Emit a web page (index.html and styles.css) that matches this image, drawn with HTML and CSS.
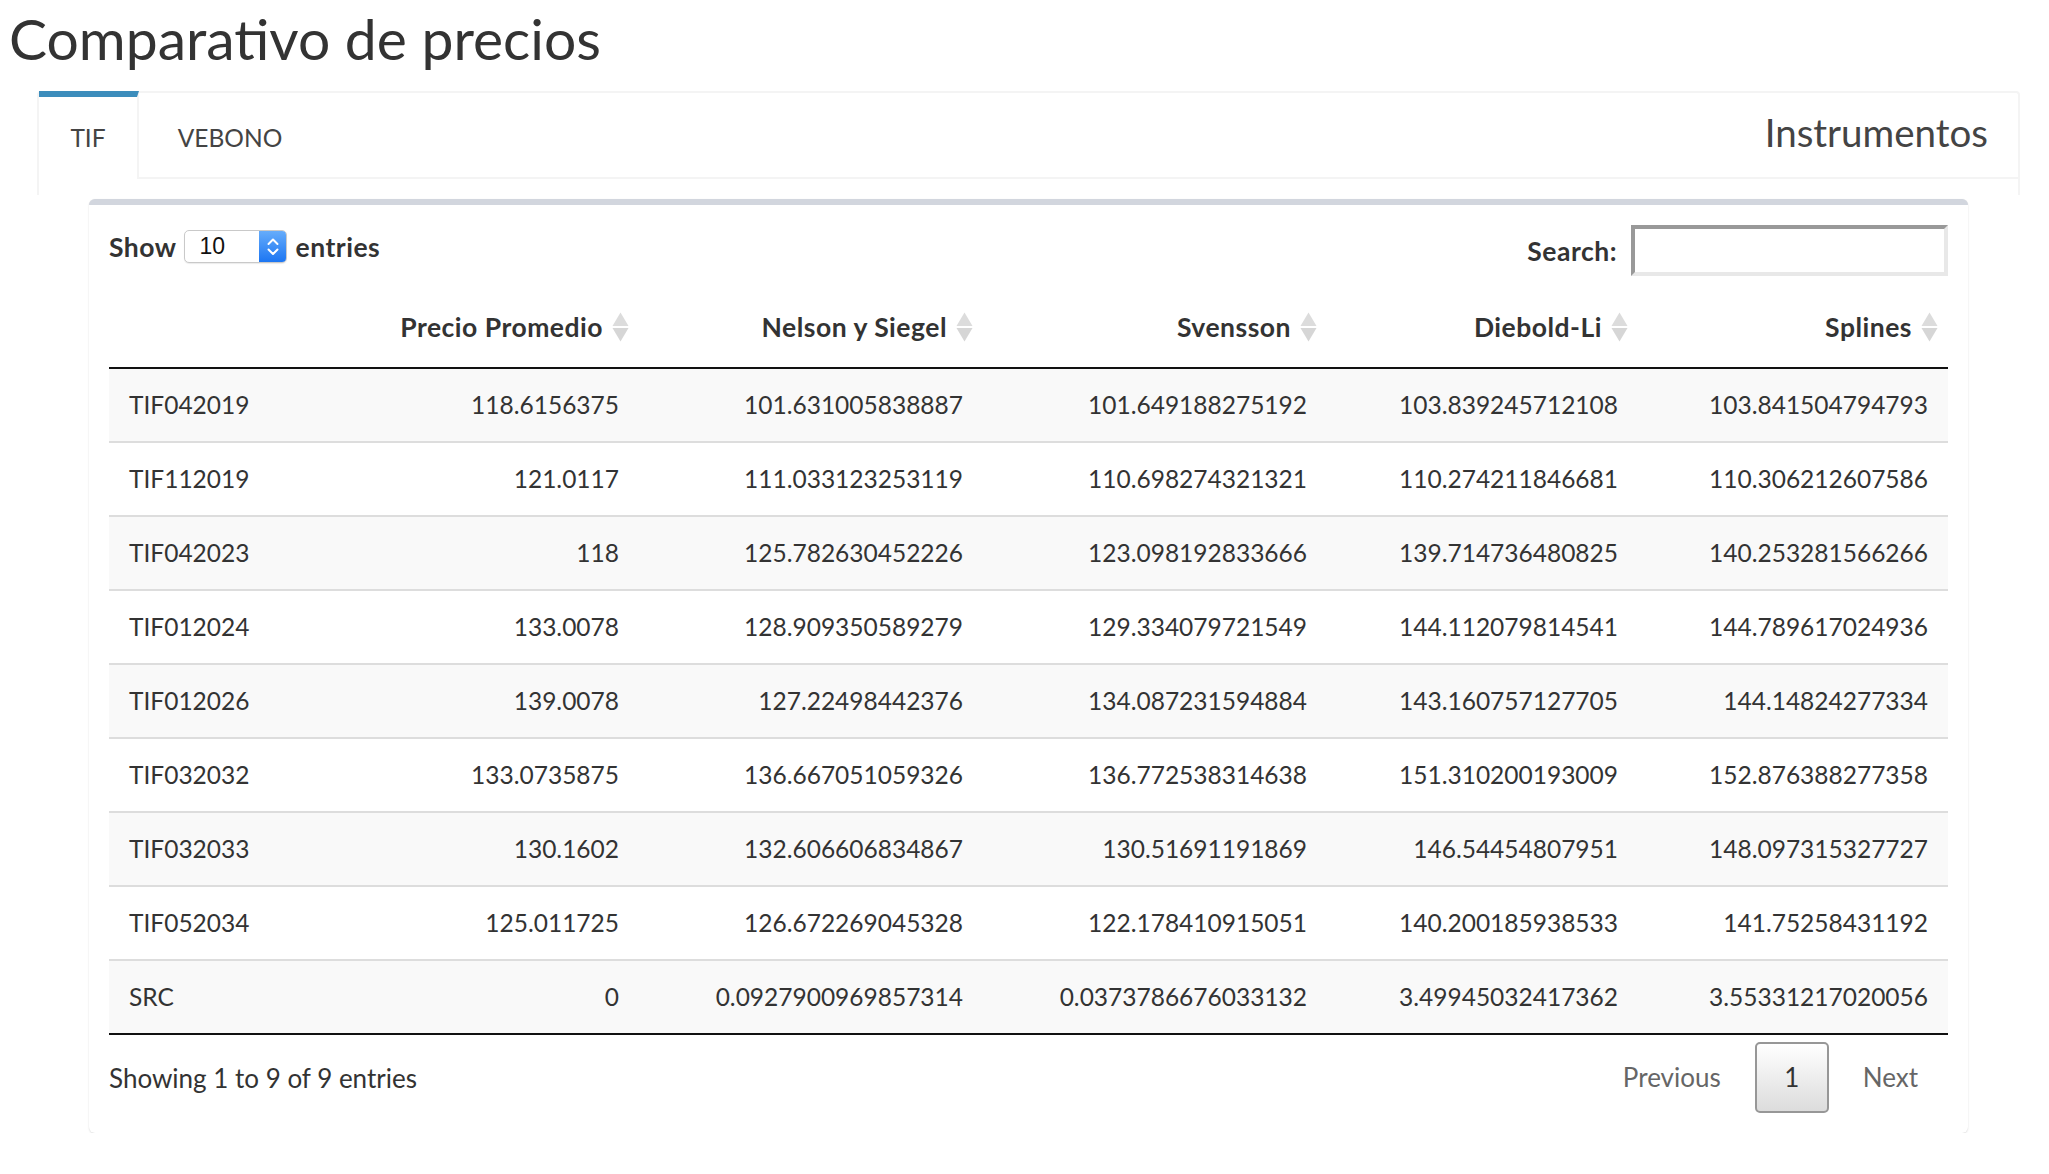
FILE: index.html
```html
<!DOCTYPE html>
<html lang="es">
<head>
<meta charset="utf-8">
<title>Comparativo de precios</title>
<link rel="stylesheet" href="styles.css">
</head>
<body>
<h1 class="page-title">Comparativo de precios</h1>
<div class="tabbox">
  <div class="tabbar">
    <div class="tab active">TIF</div>
    <div class="tab vebono">VEBONO</div>
    <div class="tabbox-title">Instrumentos</div>
  </div>
</div>
<div class="box">
  <div class="dt-controls">
    <div class="dt-length">
      <span class="lbl">Show</span>
      <div class="select">
        <span class="select-value">10</span>
        <span class="stepper">
          <svg width="28" height="33" viewBox="0 0 28 33"><path d="M9.5 14 L14 9.5 L18.5 14" fill="none" stroke="#fff" stroke-width="2" stroke-linecap="round" stroke-linejoin="round"/><path d="M9.5 19.5 L14 24 L18.5 19.5" fill="none" stroke="#fff" stroke-width="2" stroke-linecap="round" stroke-linejoin="round"/></svg>
        </span>
      </div>
      <span class="lbl">entries</span>
    </div>
    <div class="dt-filter">
      <span class="lbl">Search:</span>
      <input class="search" type="text">
    </div>
  </div>
  <table class="dt">
    <colgroup>
      <col class="c0"><col class="c1"><col class="c2"><col class="c3"><col class="c4"><col class="c5">
    </colgroup>
    <thead>
      <tr>
        <th class="rn"></th>
        <th><span class="th-in">Precio Promedio<svg class="sort" width="17" height="30" viewBox="0 0 17 30"><path d="M8.5 0.5 L16.5 14 L0.5 14 Z" fill="#dcdcdc"/><path d="M0.5 16 L16.5 16 L8.5 29.5 Z" fill="#d6d6d6"/></svg></span></th>
        <th><span class="th-in">Nelson y Siegel<svg class="sort" width="17" height="30" viewBox="0 0 17 30"><path d="M8.5 0.5 L16.5 14 L0.5 14 Z" fill="#dcdcdc"/><path d="M0.5 16 L16.5 16 L8.5 29.5 Z" fill="#d6d6d6"/></svg></span></th>
        <th><span class="th-in">Svensson<svg class="sort" width="17" height="30" viewBox="0 0 17 30"><path d="M8.5 0.5 L16.5 14 L0.5 14 Z" fill="#dcdcdc"/><path d="M0.5 16 L16.5 16 L8.5 29.5 Z" fill="#d6d6d6"/></svg></span></th>
        <th><span class="th-in">Diebold-Li<svg class="sort" width="17" height="30" viewBox="0 0 17 30"><path d="M8.5 0.5 L16.5 14 L0.5 14 Z" fill="#dcdcdc"/><path d="M0.5 16 L16.5 16 L8.5 29.5 Z" fill="#d6d6d6"/></svg></span></th>
        <th><span class="th-in">Splines<svg class="sort" width="17" height="30" viewBox="0 0 17 30"><path d="M8.5 0.5 L16.5 14 L0.5 14 Z" fill="#dcdcdc"/><path d="M0.5 16 L16.5 16 L8.5 29.5 Z" fill="#d6d6d6"/></svg></span></th>
      </tr>
    </thead>
    <tbody>
      <tr><td>TIF042019</td><td>118.6156375</td><td>101.631005838887</td><td>101.649188275192</td><td>103.839245712108</td><td>103.841504794793</td></tr>
      <tr><td>TIF112019</td><td>121.0117</td><td>111.033123253119</td><td>110.698274321321</td><td>110.274211846681</td><td>110.306212607586</td></tr>
      <tr><td>TIF042023</td><td>118</td><td>125.782630452226</td><td>123.098192833666</td><td>139.714736480825</td><td>140.253281566266</td></tr>
      <tr><td>TIF012024</td><td>133.0078</td><td>128.909350589279</td><td>129.334079721549</td><td>144.112079814541</td><td>144.789617024936</td></tr>
      <tr><td>TIF012026</td><td>139.0078</td><td>127.22498442376</td><td>134.087231594884</td><td>143.160757127705</td><td>144.14824277334</td></tr>
      <tr><td>TIF032032</td><td>133.0735875</td><td>136.667051059326</td><td>136.772538314638</td><td>151.310200193009</td><td>152.876388277358</td></tr>
      <tr><td>TIF032033</td><td>130.1602</td><td>132.606606834867</td><td>130.51691191869</td><td>146.54454807951</td><td>148.097315327727</td></tr>
      <tr><td>TIF052034</td><td>125.011725</td><td>126.672269045328</td><td>122.178410915051</td><td>140.200185938533</td><td>141.75258431192</td></tr>
      <tr><td>SRC</td><td>0</td><td>0.0927900969857314</td><td>0.0373786676033132</td><td>3.49945032417362</td><td>3.55331217020056</td></tr>
    </tbody>
  </table>
  <div class="dt-footer">
    <div class="dt-info">Showing 1 to 9 of 9 entries</div>
    <div class="dt-paginate">
      <span class="pbtn">Previous</span>
      <span class="pbtn current">1</span>
      <span class="pbtn">Next</span>
    </div>
  </div>
</div>
</body>
</html>
```
FILE: styles.css
```css
* { box-sizing: border-box; }
html, body { margin: 0; padding: 0; background: #fff; }
body {
  font-family: Lato, "Noto Sans", sans-serif;
  color: #333;
  width: 2049px;
  font-size: 24.5px;
}

.page-title {
  font-size: 57px;
  font-weight: 400;
  line-height: 72px;
  height: 72px;
  margin: 2px 0 0 9px;
  color: #333;
}

/* tab box */
.tabbox {
  width: 1983px;
  height: 104px;
  margin: 17px 0 0 37px;
  border: 2px solid #f4f4f4;
  border-bottom: 0;
  border-radius: 4px 4px 0 0;
  background: #fff;
}
.tabbar {
  display: flex;
  height: 88px;
  margin-top: -2px;
  border-bottom: 2px solid #f4f4f4;
}
.tab {
  height: 86px;
  padding-top: 8px;
  line-height: 78px;
  text-align: center;
  color: #444;
  font-size: 24.5px;
}
.tab.active {
  width: 100px;
  height: 88px;
  margin-bottom: -2px;
  padding-top: 2px;
  border-top: 6px solid #3c8dbc;
  border-right: 2px solid #f4f4f4;
  background: #fff;
}
.tab.vebono {
  width: 162px;
  margin-left: 10px;
}
.tabbox-title {
  margin-left: auto;
  padding-right: 30px;
  height: 86px;
  line-height: 82px;
  font-size: 38.5px;
  color: #444;
}

/* data box */
.box {
  width: 1879px;
  height: 934px;
  margin: 4px 0 0 89px;
  padding: 0 20px 20px;
  background: #fff;
  border-top: 6px solid #d2d6de;
  border-radius: 6px;
  box-shadow: 0 1px 2px rgba(0,0,0,0.12), 0 0 1px rgba(0,0,0,0.06);
}

.dt-controls {
  display: flex;
  justify-content: space-between;
  align-items: flex-start;
  padding-top: 20px;
}
.lbl {
  font-weight: 700;
  font-size: 26.5px;
  letter-spacing: 0.5px;
  color: #333;
}
.dt-length {
  display: flex;
  align-items: center;
  height: 33px;
  margin-top: 5px;
}
.select {
  display: flex;
  width: 103px;
  height: 33px;
  margin: 0 9px 0 7px;
  border: 1px solid #c9c9c9;
  border-radius: 5px;
  background: #fff;
  box-shadow: 0 1px 1px rgba(0,0,0,0.08);
  overflow: hidden;
}
.select-value {
  flex: 1;
  padding-left: 15px;
  font-family: "Liberation Sans", Arial, sans-serif;
  font-size: 23px;
  line-height: 31px;
  color: #111;
}
.stepper {
  width: 28px;
  height: 33px;
  margin: -1px -1px -1px 0;
  background: linear-gradient(#68aefb, #1a74f2);
  border-radius: 0 5px 5px 0;
}
.stepper svg { display: block; }

.dt-filter {
  display: flex;
  align-items: center;
  height: 51px;
}
.search {
  width: 317px;
  height: 51px;
  margin: 0 0 0 14px;
  padding: 0;
  border-style: solid;
  border-width: 4px;
  border-color: #999 #e8e8e8 #e8e8e8 #999;
  background: #fff;
  outline: none;
}

/* table */
.dt {
  width: 1839px;
  margin-top: 11px;
  table-layout: fixed;
  border-collapse: separate;
  border-spacing: 0;
}
.dt col.c0 { width: 220px; }
.dt col.c1 { width: 310px; }
.dt col.c2 { width: 344px; }
.dt col.c3 { width: 344px; }
.dt col.c4 { width: 311px; }
.dt col.c5 { width: 310px; }

.dt th {
  height: 82px;
  padding: 20px 10px 20px 20px;
  line-height: 40px;
  font-weight: 700;
  font-size: 26.5px;
  letter-spacing: 0.5px;
  text-align: right;
  border-bottom: 2px solid #111;
  color: #333;
}
.th-in {
  display: flex;
  justify-content: flex-end;
  align-items: center;
}
.sort { margin-left: 9px; flex: none; }

.dt td {
  padding: 16px 20px;
  line-height: 40px;
  text-align: right;
  border-top: 2px solid #ddd;
  color: #333;
  white-space: nowrap;
}
.dt td:first-child { text-align: left; }
.dt tbody tr:first-child td { border-top: 0; }
.dt tbody tr:nth-child(odd) td { background: #f9f9f9; }
.dt tbody tr:last-child td { border-bottom: 2px solid #111; }

/* footer */
.dt-footer {
  display: flex;
  justify-content: space-between;
  align-items: center;
  height: 71px;
  margin-top: 7px;
}
.dt-info { font-size: 26px; }
.dt-paginate { display: flex; align-items: center; font-size: 26px; }
.pbtn {
  height: 71px;
  padding: 0 28px;
  margin-left: 4px;
  line-height: 67px;
  border: 2px solid transparent;
  color: #666;
}
.pbtn.current {
  width: 74px;
  padding: 0;
  text-align: center;
  color: #333;
  border-color: #979797;
  border-radius: 5px;
  background: linear-gradient(#ffffff, #dcdcdc);
}
```
